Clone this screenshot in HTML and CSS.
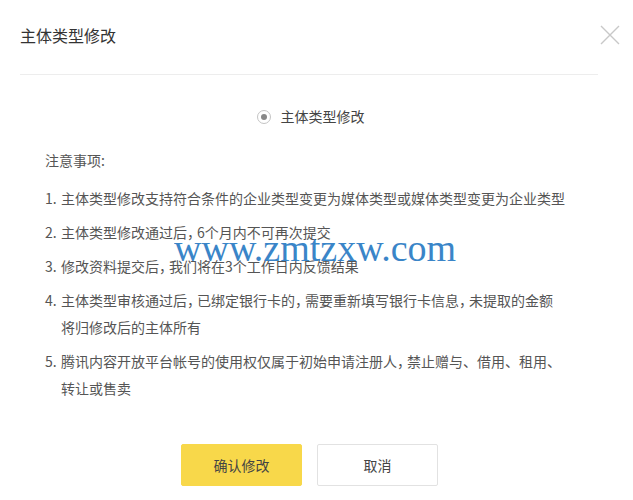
FILE: index.html
```html
<!DOCTYPE html>
<html lang="zh-CN">
<head>
<meta charset="utf-8">
<link rel="stylesheet" href="styles.css">
</head>
<body>
<div class="dialog">
  <div class="header">
    <div class="title">主体类型修改</div>
    <svg class="close" width="20" height="20" viewBox="0 0 20 20"><path d="M1 1L19 19M19 1L1 19" stroke="#c8c8c8" stroke-width="1.4" fill="none"/></svg>
  </div>
  <div class="divider"></div>
  <div class="content">
    <div class="radio-row">
      <span class="radio"><span class="dot"></span></span>
      <span class="radio-label">主体类型修改</span>
    </div>
    <div class="notes-title">注意事项:</div>
    <ol class="notes">
      <li><span class="num">1.</span><span class="txt">主体类型修改支持符合条件的企业类型变更为媒体类型或媒体类型变更为企业类型</span></li>
      <li><span class="num">2.</span><span class="txt">主体类型修改通过后<span class="p">，</span>6个月内不可再次提交</span></li>
      <li><span class="num">3.</span><span class="txt">修改资料提交后<span class="p">，</span>我们将在3个工作日内反馈结果</span></li>
      <li><span class="num">4.</span><span class="txt">主体类型审核通过后<span class="p">，</span>已绑定银行卡的<span class="p">，</span>需要重新填写银行卡信息<span class="p">，</span>未提取的金额<br>将归修改后的主体所有</span></li>
      <li><span class="num">5.</span><span class="txt">腾讯内容开放平台帐号的使用权仅属于初始申请注册人<span class="p">，</span>禁止赠与、借用、租用、<br>转让或售卖</span></li>
    </ol>
    <div class="actions">
      <button class="btn primary">确认修改</button>
      <button class="btn">取消</button>
    </div>
  </div>
  <div class="watermark">www.zmtzxw.com</div>
</div>
</body>
</html>
```
FILE: styles.css
```css
html, body {
  margin: 0;
  padding: 0;
  background: #fff;
}
body {
  font-family: "Noto Sans CJK SC", "Noto Sans", sans-serif;
  color: #555;
}
.dialog {
  position: relative;
  width: 633px;
  height: 500px;
  overflow: hidden;
}
.header {
  display: flex;
  align-items: center;
  justify-content: space-between;
  height: 70px;
  padding: 0 13px 0 20px;
}
.title {
  font-size: 16px;
  color: #333;
  line-height: 20px;
}
.close {
  display: block;
  margin-top: -1px;
}
.divider {
  height: 1px;
  background: #ededed;
  margin: 4px 35px 0 20px;
}
.content {
  display: flex;
  flex-direction: column;
  padding: 0 45px;
}
.radio-row {
  display: flex;
  align-items: center;
  justify-content: center;
  height: 27px;
  margin-top: 28px;
  gap: 10px;
  padding-right: 12px;
}
.radio {
  width: 14px;
  height: 14px;
  border: 1px solid #c4c4c4;
  border-radius: 50%;
  display: flex;
  align-items: center;
  justify-content: center;
  box-sizing: border-box;
}
.dot {
  width: 6px;
  height: 6px;
  border-radius: 50%;
  background: #888;
}
.radio-label {
  font-size: 14px;
  color: #444;
  line-height: 27px;
}
.notes-title {
  font-size: 14px;
  line-height: 27px;
  margin-top: 17px;
}
.notes {
  list-style: none;
  margin: 11px 0 0;
  padding: 0;
  font-size: 14px;
  line-height: 27px;
}
.notes li {
  display: flex;
  margin-bottom: 7px;
}
.num {
  flex: none;
  width: 16px;
}
.txt {
  white-space: nowrap;
}
.p {
  font-feature-settings: "halt";
  margin-right: 3px;
}
.actions {
  display: flex;
  justify-content: center;
  gap: 15px;
  margin-top: 35px;
  padding-right: 14px;
}
.btn {
  width: 121px;
  height: 42px;
  border: 1px solid #e2e2e2;
  background: #fff;
  font-family: "Noto Sans CJK SC", "Noto Sans", sans-serif;
  font-size: 14px;
  color: #444;
  border-radius: 2px;
  padding: 0;
}
.btn.primary {
  background: #f8d84a;
  border-color: #f8d84a;
  color: #444;
}
.watermark {
  position: absolute;
  left: 174px;
  top: 226px;
  font-family: "Liberation Serif", serif;
  font-size: 38px;
  line-height: 44px;
  color: #2a7bc4;
  opacity: 0.92;
}
```
